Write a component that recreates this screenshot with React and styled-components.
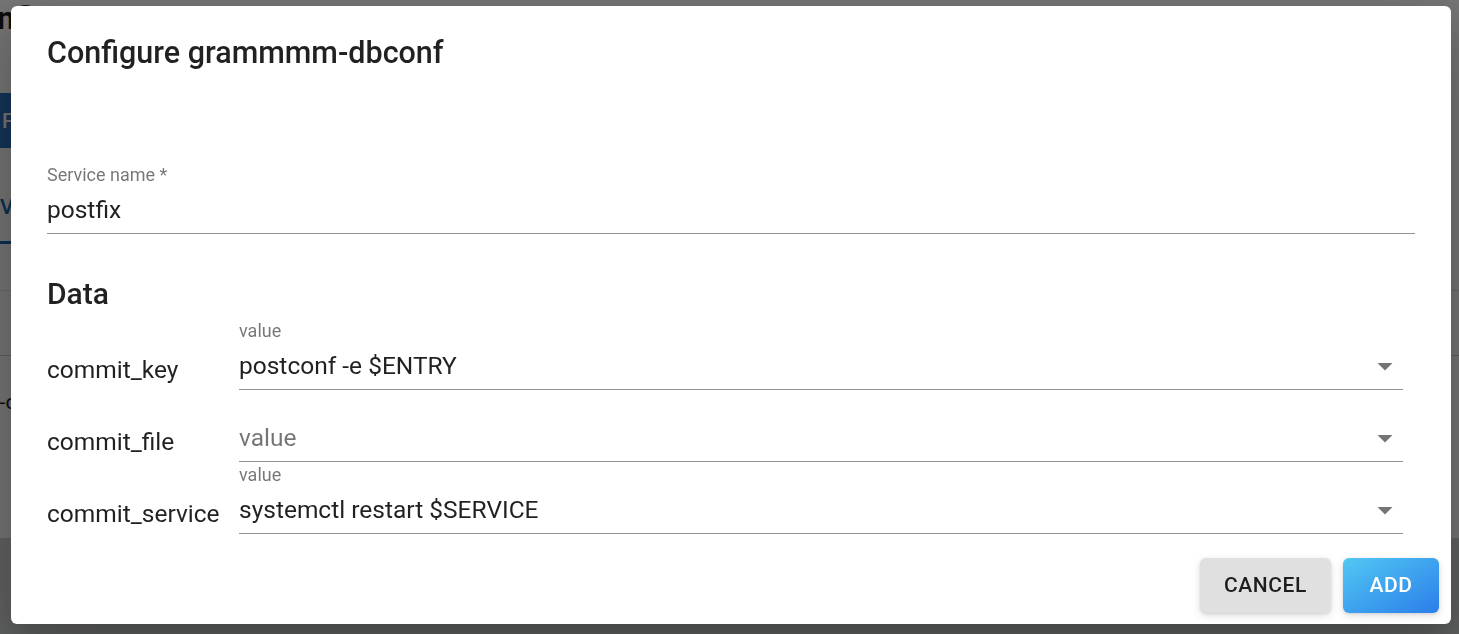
import styled, { createGlobalStyle } from "styled-components";

const GlobalStyle = createGlobalStyle`
	* {
		box-sizing: border-box;
	}
	html, body {
		margin: 0;
		padding: 0;
	}
	body {
		font-family: Roboto, "Liberation Sans", sans-serif;
		color: rgba(0, 0, 0, 0.87);
		background: #fff;
		overflow: hidden;
	}
`;

const dataRows = [
	{ key: "commit_key", value: "postconf -e $ENTRY" },
	{ key: "commit_file", value: "" },
	{ key: "commit_service", value: "systemctl restart $SERVICE" },
];

const ArrowDropDown = () => (
	<ArrowIcon viewBox="0 0 24 24" aria-hidden="true">
		<path d="M7 10l5 5 5-5z" />
	</ArrowIcon>
);

const Field = ({ label, value, select }) => {
	const filled = value !== "";
	return (
		<StyledField>
			<FieldLabel>{filled ? label : ""}</FieldLabel>
			<InputRow>
				<InputText $placeholder={!filled}>{filled ? value : label}</InputText>
				{select && <ArrowDropDown />}
			</InputRow>
		</StyledField>
	);
};

const App = () => {
	return (
		<>
			<GlobalStyle />
			<Page>
				<PageTitle>Configuration</PageTitle>
				<PageToolbar>
					<PrimaryButton>FILTER</PrimaryButton>
				</PageToolbar>
				<TabBar>
					<Tab>VIEW</Tab>
				</TabBar>
				<Table>
					<TableHead />
					<TableRow>grammmm-dbconf</TableRow>
					<TableRow />
				</Table>
				<Footer />
			</Page>

			<Backdrop>
				<Dialog role="dialog">
					<DialogTitle>Configure grammmm-dbconf</DialogTitle>
					<DialogContent>
						<Field label="Service name *" value="postfix" />
						<SectionTitle>Data</SectionTitle>
						<DataGrid>
							{dataRows.map((row) => (
								<DataRow key={row.key}>
									<KeyLabel>{row.key}</KeyLabel>
									<Field label="value" value={row.value} select />
								</DataRow>
							))}
						</DataGrid>
					</DialogContent>
					<DialogActions>
						<CancelButton>Cancel</CancelButton>
						<AddButton>Add</AddButton>
					</DialogActions>
				</Dialog>
			</Backdrop>
		</>
	);
};

export default App;

/* page behind the dialog */
const Page = styled.div`
	height: 100vh;
	display: flex;
	flex-direction: column;
	background: #fff;
	overflow: hidden;
`;
const PageTitle = styled.h1`
	margin: 0 0 0 -42px;
	font-size: 32px;
	font-weight: 700;
	line-height: 36px;
	white-space: nowrap;
	color: #1c1c1c;
`;
const PageToolbar = styled.div`
	display: flex;
	margin: 57px 0 0 -22px;
`;
const PrimaryButton = styled.button`
	height: 55px;
	padding: 0 24px;
	border: 0;
	border-radius: 6px;
	background: #2a72bd;
	color: #fff;
	font: 500 21px Roboto, sans-serif;
	letter-spacing: 0.6px;
`;
const TabBar = styled.div`
	display: flex;
	height: 72px;
	margin: 24px 0 0 -36px;
`;
const Tab = styled.div`
	display: flex;
	align-items: center;
	padding: 0 36px;
	font-size: 21px;
	font-weight: 500;
	color: #1a66b3;
	border-bottom: 3px solid #1a66b3;
`;
const Table = styled.div`
	margin-top: 46px;
	border-top: 1px solid #e4e4e4;
`;
const TableHead = styled.div`
	height: 65px;
	border-bottom: 1px solid #cfcfcf;
`;
const TableRow = styled.div`
	height: 91px;
	display: flex;
	align-items: center;
	margin-left: -104px;
	font-size: 21px;
	white-space: nowrap;
	color: #1c1c1c;
`;
const Footer = styled.div`
	flex: 1;
	background: #d2d6d4;
`;

/* dialog */
const Backdrop = styled.div`
	position: fixed;
	inset: 0;
	display: flex;
	padding: 6px 8px 10px 11px;
	background: rgba(0, 0, 0, 0.55);
`;
const Dialog = styled.div`
	flex: 1;
	display: flex;
	flex-direction: column;
	background: #fff;
	border-radius: 6px;
	box-shadow: 0 16px 36px rgba(0, 0, 0, 0.2), 0 36px 80px rgba(0, 0, 0, 0.14);
`;
const DialogTitle = styled.h2`
	margin: 0;
	padding: 23px 36px 24px;
	font-size: 30.5px;
	font-weight: 500;
	line-height: 48px;
	color: rgba(0, 0, 0, 0.87);
`;
const DialogContent = styled.div`
	flex: 1;
	padding: 65px 36px 0;
`;
const StyledField = styled.div`
	display: flex;
	flex-direction: column;
	min-width: 0;
`;
const FieldLabel = styled.label`
	height: 18px;
	margin-bottom: 3px;
	font-size: 18px;
	line-height: 17px;
	color: rgba(0, 0, 0, 0.54);
`;
const InputRow = styled.div`
	display: flex;
	align-items: center;
	padding: 9px 0;
	border-bottom: 1px solid rgba(0, 0, 0, 0.42);
`;
const InputText = styled.span`
	flex: 1;
	font-size: 24.5px;
	line-height: 28px;
	white-space: nowrap;
	color: ${(p) => (p.$placeholder ? "rgba(0, 0, 0, 0.54)" : "rgba(0, 0, 0, 0.87)")};
`;
const ArrowIcon = styled.svg`
	width: 36px;
	height: 36px;
	margin: -4px 0;
	flex-shrink: 0;
	fill: rgba(0, 0, 0, 0.54);
`;
const SectionTitle = styled.h3`
	margin: 38px 0 6px;
	font-size: 30px;
	font-weight: 500;
	line-height: 44px;
	color: rgba(0, 0, 0, 0.87);
`;
const DataGrid = styled.div`
	display: flex;
	flex-direction: column;
	gap: 4px;
	margin-right: 12px;
`;
const DataRow = styled.div`
	display: grid;
	grid-template-columns: 192px 1fr;
	align-items: end;
`;
const KeyLabel = styled.span`
	padding-bottom: 2px;
	font-size: 24.5px;
	line-height: 36px;
	white-space: nowrap;
	color: rgba(0, 0, 0, 0.87);
`;
const DialogActions = styled.div`
	display: flex;
	justify-content: flex-end;
	gap: 12px;
	padding: 12px 12px 11px;
`;
const BaseButton = styled.button`
	min-width: 96px;
	padding: 9px 24px;
	border: 0;
	border-radius: 6px;
	font-family: Roboto, "Liberation Sans", sans-serif;
	font-size: 21px;
	font-weight: 500;
	line-height: 37px;
	letter-spacing: 0.6px;
	text-transform: uppercase;
	box-shadow: 0 3px 8px rgba(0, 0, 0, 0.12), 0 1px 3px rgba(0, 0, 0, 0.1);
`;
const CancelButton = styled(BaseButton)`
	background: #e0e0e0;
	color: rgba(0, 0, 0, 0.87);
`;
const AddButton = styled(BaseButton)`
	background: linear-gradient(to bottom right, #52c8f3, #2b7ee9);
	color: #fff;
`;
